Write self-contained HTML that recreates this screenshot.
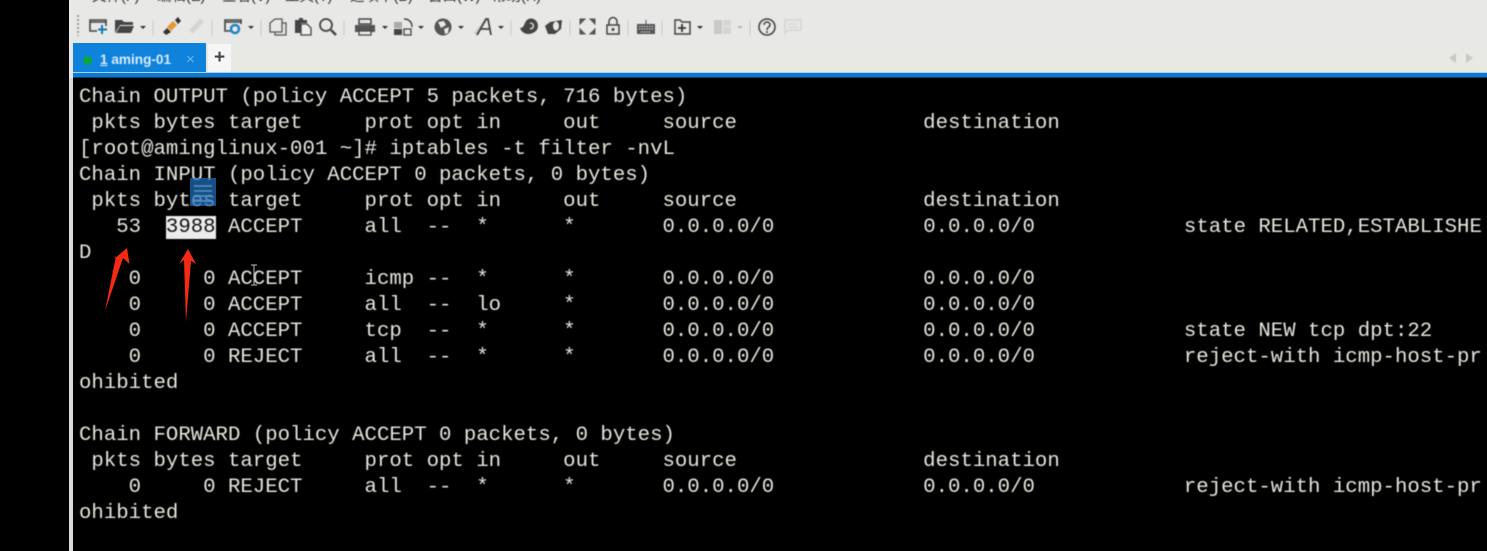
<!DOCTYPE html>
<html><head><meta charset="utf-8">
<style>
html,body{margin:0;padding:0;background:#000;width:1487px;height:551px;overflow:hidden}
#win{position:absolute;left:69px;top:0;width:1418px;height:551px;background:#e8e8e6;overflow:hidden}
#edge{position:absolute;left:69px;top:78px;width:4px;height:473px;background:#d9d9d9}
.m{position:absolute;top:-11px;font:14.5px/16px "Liberation Sans","Noto Sans CJK SC",sans-serif;color:#333;white-space:pre;filter:blur(.5px)}
#tabbar{position:absolute;left:73px;top:43px;width:1414px;height:30px;background:linear-gradient(#e8e8e6,#e9e9e2)}
#tab{position:absolute;left:73px;top:43px;width:133px;height:30px;background:#0f82dc}
#tabt{position:absolute;left:100px;top:52px;font:bold 13.600px/16px "Liberation Sans",sans-serif;color:#d8ecfa;white-space:pre;filter:blur(.45px)}
#tabx{position:absolute;left:186px;top:51px;font:15px/18px "Liberation Sans",sans-serif;color:#6db5ec}
#dot{position:absolute;left:83px;top:56px;width:9px;height:9px;border-radius:50%;background:#0aa53c}
#plus{position:absolute;left:208px;top:44px;width:23px;height:29px;background:#f6f6f6;font:bold 19px/27px "Liberation Sans",sans-serif;color:#444;text-align:center}
#line{position:absolute;left:73px;top:72px;width:1414px;height:6px;background:linear-gradient(#a6d4ef 0,#a6d4ef 1px,#0f78d0 1px,#0f78d0 5px,#0b3c6e 5px)}
#term{position:absolute;left:73px;top:78px;width:1414px;height:473px;background:#000}
#t{position:absolute;left:79px;top:85px;margin:0;font:20.69px/26px "Liberation Mono",monospace;color:#e6e6de;white-space:pre;filter:blur(.45px)}
#t b{font-weight:normal;background:#ececec;color:#111}
svg{position:absolute;left:0;top:0}
</style></head><body>
<div id="win"></div>
<div class="m" style="left:92px">文件(F)</div>
<div class="m" style="left:157px">编辑(E)</div>
<div class="m" style="left:222px">查看(V)</div>
<div class="m" style="left:285px">工具(T)</div>
<div class="m" style="left:350px">选项卡(B)</div>
<div class="m" style="left:428px">窗口(W)</div>
<div class="m" style="left:492px">帮助(H)</div>
<div id="tabbar"></div>
<div id="tab"></div><div id="dot"></div>
<div id="tabt"><u>1</u> aming-01</div><div id="tabx">×</div>
<div id="plus">+</div>
<div id="line"></div>
<div id="term"></div>
<div id="edge"></div>
<pre id="t">Chain OUTPUT (policy ACCEPT 5 packets, 716 bytes)
 pkts bytes target     prot opt in     out     source               destination
[root@aminglinux-001 ~]# iptables -t filter -nvL
Chain INPUT (policy ACCEPT 0 packets, 0 bytes)
 pkts bytes target     prot opt in     out     source               destination
   53  <b>3988</b> ACCEPT     all  --  *      *       0.0.0.0/0            0.0.0.0/0            state RELATED,ESTABLISHE
D
    0     0 ACCEPT     icmp --  *      *       0.0.0.0/0            0.0.0.0/0
    0     0 ACCEPT     all  --  lo     *       0.0.0.0/0            0.0.0.0/0
    0     0 ACCEPT     tcp  --  *      *       0.0.0.0/0            0.0.0.0/0            state NEW tcp dpt:22
    0     0 REJECT     all  --  *      *       0.0.0.0/0            0.0.0.0/0            reject-with icmp-host-pr
ohibited

Chain FORWARD (policy ACCEPT 0 packets, 0 bytes)
 pkts bytes target     prot opt in     out     source               destination
    0     0 REJECT     all  --  *      *       0.0.0.0/0            0.0.0.0/0            reject-with icmp-host-pr
ohibited</pre>
<svg width="1487" height="551" viewBox="0 0 1487 551" fill="none">
<g style="filter:blur(.6px)">
<!-- grip -->
<path d="M78 15V36" stroke="#999" stroke-width="2" stroke-dasharray="2 2"/>
<!-- new session -->
<path d="M97 31H90V20H106V26M90 22H106" stroke="#444" stroke-width="1.600"/>
<path d="M102 25V34M98 29.500H107" stroke="#1278b4" stroke-width="2"/>
<!-- open folder -->
<path d="M115 33V20H122L124 22H133V25H120L115 33ZM116 33H131L134 26H120Z" fill="#444"/>
<path d="M140 26H146L143 29Z" fill="#333"/>
<path d="M153 20V36" stroke="#ccc"/>
<!-- connect plug -->
<path d="M163 32L167 28 171 32 166 35Z" fill="#333"/>
<path d="M167 27L173 21 177 25 171 31Z" fill="#e8962e"/>
<path d="M175 20L178 17 181 21 178 24Z" fill="#333"/>
<path d="M191 32L202 20" stroke="#d5d5d5" stroke-width="5"/>
<path d="M212 20V36" stroke="#ccc"/>
<!-- settings window -->
<path d="M231 31H225V20H241V24M225 22H241" stroke="#444" stroke-width="1.600"/>
<circle cx="235" cy="29" r="4" stroke="#1a84c8" stroke-width="2.500"/>
<path d="M248 26H254L251 29Z" fill="#333"/>
<path d="M261 20V36" stroke="#ccc"/>
<!-- copy -->
<path d="M270 32V23L275 19H282V32ZM282 23H286V35H275V32" stroke="#555" stroke-width="1.300"/>
<!-- paste -->
<path d="M295 33V20H299V18H303V20H307V23H301V33Z" fill="#444"/>
<path d="M301 24H307L311 28V35H301Z" fill="#eee" stroke="#444" stroke-width="1.300"/>
<!-- find -->
<circle cx="326" cy="25" r="6" stroke="#444" stroke-width="1.800"/>
<path d="M331 30L336 35" stroke="#444" stroke-width="2.500"/>
<path d="M344 20V36" stroke="#ccc"/>
<!-- print -->
<path d="M359 19H371V24H359Z" stroke="#444" stroke-width="1.500"/>
<path d="M355 25H375V32H355Z" fill="#555"/>
<path d="M359 31H371V35H359Z" fill="#eee" stroke="#444" stroke-width="1.300"/>
<path d="M382 26H388L385 29Z" fill="#333"/>
<!-- transfer -->
<path d="M394 22H402V28H394Z" fill="#aaa"/><path d="M394 29H402V35H394Z" fill="#444"/>
<path d="M404 29H411V35H404Z" stroke="#444" stroke-width="1.300"/>
<path d="M404 19C409 19 412 22 412 27" stroke="#444" stroke-width="1.500"/>
<path d="M418 26H424L421 29Z" fill="#333"/>
<!-- globe -->
<circle cx="443" cy="27" r="8.500" fill="#555"/>
<path d="M438 22L444 21 446 25 441 28ZM444 29L449 27 448 33 445 34Z" fill="#e8e8e6"/>
<path d="M458 26H464L461 29Z" fill="#333"/>
<!-- font A -->
<path d="M475 34L487 19" stroke="#ccc" stroke-width="3"/>
<path d="M477 35L486 19H488L491 35M480 29H490" stroke="#444" stroke-width="1.800"/>
<path d="M498 26H504L501 29Z" fill="#333"/>
<path d="M511 20V36" stroke="#ccc"/>
<!-- swirl -->
<path d="M520 28C524 28 524 24 526 21C530 16 538 19 538 26C538 31 533 34 528 34C524 34 521 31 520 28Z" fill="#444"/>
<path d="M530 23C534 23 535 28 530 29" stroke="#e8e8e6" stroke-width="1.300"/>
<!-- eye-ish -->
<path d="M545 26L550 22 562 20 561 29 555 34 548 34Z" fill="#444"/>
<ellipse cx="556" cy="26" rx="3" ry="4.500" fill="#e8e8e6"/>
<path d="M570 20V36" stroke="#ccc"/>
<!-- fullscreen -->
<path d="M580 19H585L580 24ZM595 19H590L595 24ZM580 34H585L580 29ZM595 34H590L595 29Z" fill="#555" stroke="#555"/>
<!-- lock -->
<path d="M607 25H619V34H607Z" stroke="#444" stroke-width="1.500"/>
<path d="M609 25V22C609 16 617 16 617 22V25" stroke="#444" stroke-width="1.500"/>
<circle cx="613" cy="29.500" r="1.500" fill="#444"/>
<path d="M628 20V36" stroke="#ccc"/>
<!-- keyboard -->
<path d="M637 24H655V34H637Z" fill="#555"/>
<path d="M639 26.500H653M639 29H653M641 32H651" stroke="#ddd" stroke-width="1" stroke-dasharray="1.500 1"/>
<path d="M646 24V20" stroke="#555"/>
<path d="M662 20V36" stroke="#ccc"/>
<!-- new tab box -->
<path d="M675 20H680L682 22H690V34H675Z" stroke="#444" stroke-width="1.500"/>
<path d="M682 24V32M678 28H686" stroke="#333" stroke-width="1.800"/>
<path d="M697 26H703L700 29Z" fill="#333"/>
<!-- panels -->
<path d="M714 20H722V34H714Z" fill="#c9c9c9"/><path d="M723 20H731V26H723ZM723 27H731V34H723Z" fill="#d5d5d5"/>
<path d="M737 26H743L740 29Z" fill="#bbb"/>
<path d="M750 20V36" stroke="#ccc"/>
<!-- help -->
<circle cx="767" cy="27" r="8" stroke="#444" stroke-width="1.600"/>
<path d="M764 25C764 21 770 21 770 25C770 27 767 27 767 30" stroke="#444" stroke-width="1.500"/>
<circle cx="767" cy="32" r="1" fill="#444"/>
<!-- chat -->
<path d="M785 20H801V30H789L785 33Z" stroke="#d5d5d5" stroke-width="1.500"/>
<path d="M788 24H798M788 27H798" stroke="#d5d5d5"/>
<!-- scroll arrows -->
<path d="M1456 53L1449 58 1456 63Z" fill="#c8c8c8"/>
<path d="M1466 53L1473 58 1466 63Z" fill="#c8c8c8"/>
</g>
<!-- floating doc icon -->
<rect x="190" y="178" width="26" height="28" fill="#1f6db5" fill-opacity=".72"/>
<path d="M194 186H212M194 191H212M194 196H212M194 201H212" stroke="#5a93c8" stroke-width="1.500" style="filter:blur(.5px)"/>
<!-- red arrows -->
<path d="M127 248L129.500 264 123 258 105 311 116 256 114 259Z" fill="#f52a14"/>
<path d="M188 249L196 264 191 261 186 322 184 260 179 264Z" fill="#f52a14"/>
<!-- I-beam cursor -->
<path d="M251 265H257M254 265V285M251 285H257" stroke="#bbb" stroke-width="1"/>
</svg>
</body></html>
